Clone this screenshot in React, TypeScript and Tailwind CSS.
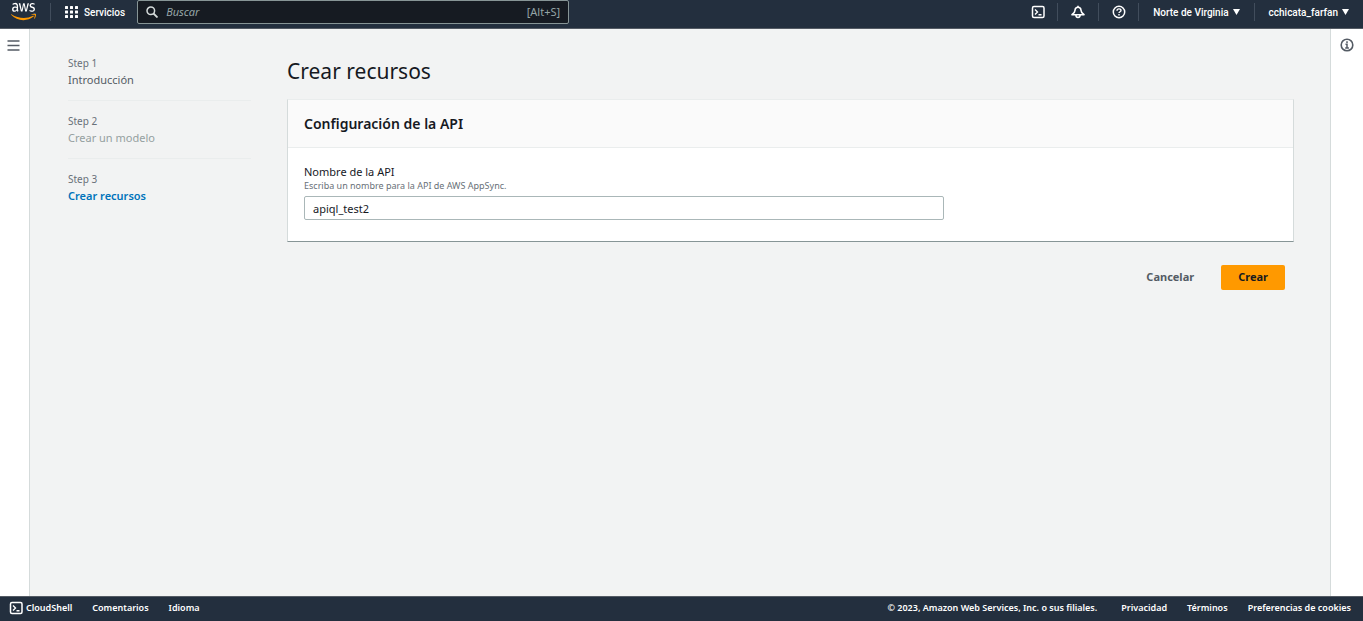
import type { ReactNode } from "react";
import { FaAws } from "react-icons/fa";

function AwsLogo() {
  return (
    <a href="#inicio" aria-label="AWS" className="block">
      <svg width="0" height="0" className="absolute" aria-hidden="true">
        <defs>
          <linearGradient id="aws-fill" gradientUnits="userSpaceOnUse" x1="0" y1="0" x2="0" y2="512">
            <stop offset="0.62" stopColor="#fff" />
            <stop offset="0.62" stopColor="#f90" />
          </linearGradient>
        </defs>
      </svg>
      <FaAws preserveAspectRatio="none" className="h-[23px] w-[25px] fill-[url(#aws-fill)]" />
    </a>
  );
}

function ShellIcon() {
  return (
    <svg width="16" height="16" viewBox="0 0 16 16" fill="none" stroke="currentColor" aria-hidden="true">
      <rect x="2.5" y="2.5" width="11.5" height="11" rx="1.5" strokeWidth="1.5" />
      <path d="M5 5.5 7.5 8 5 10.5M8.5 10.8h3" strokeWidth="1.4" />
    </svg>
  );
}

function BellIcon() {
  return (
    <svg width="16" height="16" viewBox="0 0 16 16" fill="none" stroke="currentColor" strokeWidth="1.6" strokeLinejoin="round" aria-hidden="true">
      <path d="M8 3.3c-1.9 0-2.9 1.200-2.900 2.700C5.100 8 4.300 8.900 2 10.700h12C11.700 8.900 10.900 8 10.900 6c0-1.500-1-2.700-2.900-2.700Z" />
      <path d="M8 1.700v1.600M5.900 11c.1 1.700 1 2.500 2.100 2.500s2-.8 2.100-2.500" />
    </svg>
  );
}

function HelpIcon() {
  return (
    <svg width="16" height="16" viewBox="0 0 16 16" fill="none" stroke="currentColor" strokeWidth="1.5" aria-hidden="true">
      <circle cx="8" cy="8" r="5.7" />
      <path d="M6 6.700c0-1.100.8-1.800 2-1.800s2 .7 2 1.600c0 1.200-2 1.300-2 2.600M8 10.100v1.300" strokeWidth="1.4" />
    </svg>
  );
}

function InfoIcon() {
  return (
    <svg width="16" height="16" viewBox="0 0 16 16" fill="none" stroke="currentColor" strokeWidth="1.6" aria-hidden="true">
      <circle cx="8" cy="8" r="5.8" />
      <path d="M8 4.300v1.600M6.500 7.300H8v3.700M6.200 11h3.700" strokeWidth="1.5" />
    </svg>
  );
}

function GridIcon() {
  return (
    <svg width="13" height="12" viewBox="0 0 13 12" fill="currentColor" aria-hidden="true">
      {[0, 5, 10].map((x) =>
        [0, 4.5, 9].map((y) => <rect key={`${x}-${y}`} x={x} y={y} width="3" height="3" rx="0.5" />),
      )}
    </svg>
  );
}

function Caret() {
  return (
    <svg width="7" height="6" viewBox="0 0 7 6" fill="currentColor" aria-hidden="true">
      <path d="M0 0h7L3.5 6Z" />
    </svg>
  );
}

function Cell({ children, label, className }: { children: ReactNode; label?: string; className: string }) {
  return (
    <div className="flex h-[18px] items-center border-l border-[#414d5c]">
      <button type="button" aria-label={label} className={`flex items-center justify-center ${className}`}>
        {children}
      </button>
    </div>
  );
}

function Header() {
  return (
    <header className="flex h-[29px] shrink-0 justify-between border-b border-[#545b64] bg-[#232f3e] font-['Roboto',sans-serif] text-[10px] font-medium text-white">
      <div className="flex items-start">
        <div className="flex w-[50px] pl-[11px]">
          <AwsLogo />
        </div>
        <div className="mt-[3px] flex h-[18px] items-center border-l border-[#414d5c] pr-3 pl-3.5">
          <button type="button" className="flex items-center gap-1.5">
            <GridIcon />
            Servicios
          </button>
        </div>
        <label className="flex h-6 w-[432px] items-center rounded-xs border border-[#879596] bg-[#161b22] px-2 font-['Noto_Sans',sans-serif] text-[11px] font-normal text-[#95a5a6]">
          <svg width="12" height="12" viewBox="0 0 12 12" fill="none" stroke="#d5dbdb" strokeWidth="1.5" aria-hidden="true">
            <circle cx="4.8" cy="4.8" r="3.8" />
            <path d="m7.5 7.5 4 4" strokeWidth="1.8" />
          </svg>
          <input
            type="search"
            aria-label="Buscar"
            placeholder="Buscar"
            className="ml-2 min-w-0 flex-1 bg-transparent italic outline-none placeholder:text-[#95a5a6]"
          />
          <span>[Alt+S]</span>
        </label>
      </div>
      <div className="flex pt-[3px]">
        <button type="button" aria-label="CloudShell" className="flex h-[18px] w-[39px] items-center justify-center">
          <ShellIcon />
        </button>
        <Cell label="Notificaciones" className="w-10">
          <BellIcon />
        </Cell>
        <Cell label="Ayuda" className="w-[39px]">
          <HelpIcon />
        </Cell>
        <Cell className="gap-1 px-3.5">
          Norte de Virginia <Caret />
        </Cell>
        <Cell className="gap-1 px-3.5">
          cchicata_farfan <Caret />
        </Cell>
      </div>
    </header>
  );
}

const steps = [
  { label: "Step 1", title: "Introducción", style: "text-[#545b64]" },
  { label: "Step 2", title: "Crear un modelo", style: "text-[#95a0a0]" },
  { label: "Step 3", title: "Crear recursos", style: "font-semibold text-[#0073bb]" },
];

function Steps() {
  return (
    <nav aria-label="Pasos" className="w-[183px] shrink-0 pt-3.5">
      <ol className="divide-y divide-[#eaeded]">
        {steps.map((step) => (
          <li key={step.label} className="h-[58px] pt-3">
            <div className="text-[10px] leading-4 text-[#687078]">{step.label}</div>
            <a href="#paso" className={`mt-px block text-[11px] leading-4 ${step.style}`}>
              {step.title}
            </a>
          </li>
        ))}
      </ol>
    </nav>
  );
}

function Content() {
  return (
    <main className="min-w-0 flex-1 pt-7">
      <h1 className="text-[21px] leading-7 text-[#16191f]">Crear recursos</h1>
      <section className="mt-3.5 border border-t-[#eaeded] border-r-[#d5dbdb] border-b-[#879596] border-l-[#d5dbdb] bg-white">
        <div className="border-b border-[#eaeded] bg-[#fafafa] px-4 py-3">
          <h2 className="text-[14px] leading-[23px] font-semibold text-[#16191f]">Configuración de la API</h2>
        </div>
        <div className="px-4 pt-4 pb-[21px]">
          <label htmlFor="api-name" className="block text-[11px] leading-4 text-[#16191f]">
            Nombre de la API
          </label>
          <p id="api-hint" className="text-[9px] leading-3 text-[#687078]">
            Escriba un nombre para la API de AWS AppSync.
          </p>
          <input
            id="api-name"
            aria-describedby="api-hint"
            defaultValue="apiql_test2"
            className="mt-1 block h-6 w-full max-w-[640px] rounded-xs border border-[#aab7b8] bg-white px-2 text-[11px] text-[#16191f]"
          />
        </div>
      </section>
      <div className="mt-[23px] flex justify-end gap-2.5 pr-[9px] text-[11px] font-bold">
        <button type="button" className="h-[25px] px-[17px] text-[#545b64]">
          Cancelar
        </button>
        <button type="button" className="h-[25px] rounded-xs bg-[#ff9900] px-[17px] text-[#16191f]">
          Crear
        </button>
      </div>
    </main>
  );
}

function Footer() {
  return (
    <footer className="flex h-[25px] shrink-0 items-center justify-between border-t border-[#545b64] bg-[#232f3e] pr-3 pb-0.5 pl-2 text-[9px] font-semibold text-white">
      <div className="flex items-center gap-5">
        <button type="button" className="flex items-center gap-0.5">
          <ShellIcon />
          CloudShell
        </button>
        <a href="#comentarios">Comentarios</a>
        <button type="button">Idioma</button>
      </div>
      <div className="flex items-center">
        <span className="mr-6">© 2023, Amazon Web Services, Inc. o sus filiales.</span>
        <div className="flex gap-5">
          <a href="#privacidad">Privacidad</a>
          <a href="#terminos">Términos</a>
          <a href="#cookies">Preferencias de cookies</a>
        </div>
      </div>
    </footer>
  );
}

export default function App() {
  return (
    <div className="flex min-h-screen flex-col bg-[#f2f3f3] font-['Noto_Sans',sans-serif]">
      <Header />
      <div className="flex flex-1">
        <aside className="w-[30px] shrink-0 border-r border-[#d5dbdb] bg-white pt-[11px] pl-[7px]">
          <button type="button" aria-label="Abrir navegación" className="block text-[#545b64]">
            <svg width="13" height="11" viewBox="0 0 13 11" stroke="currentColor" strokeWidth="1.5" aria-hidden="true">
              <path d="M.5 1h12M.5 5.500h12M.5 10h12" />
            </svg>
          </button>
        </aside>
        <div className="flex min-w-0 flex-1 gap-9 pr-9 pl-[38px]">
          <Steps />
          <Content />
        </div>
        <aside className="w-[33px] shrink-0 border-l border-[#d5dbdb] bg-white pt-2 pl-2">
          <button type="button" aria-label="Abrir información" className="block text-[#545b64]">
            <InfoIcon />
          </button>
        </aside>
      </div>
      <Footer />
    </div>
  );
}
